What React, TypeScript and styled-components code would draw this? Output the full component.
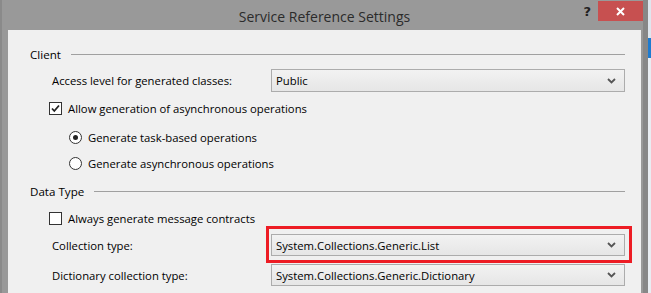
import React from "react";
import styled, { createGlobalStyle } from "styled-components";

const Global = createGlobalStyle`
  html, body { margin: 0; padding: 0; }
  body {
    width: 651px;
    height: 293px;
    overflow: hidden;
    background: #8c8c8c;
    font-family: "Open Sans", "Noto Sans", sans-serif;
  }
`;

const Screen = styled.div`
  display: flex;
  width: 651px;
  height: 293px;
`;

const Window = styled.div`
  width: 641px;
  height: 293px;
  background: #999999;
  border-left: 2px solid #8a8a8a;
  display: flex;
  flex-direction: column;
  position: relative;
`;

const EdgeStrip = styled.div`
  width: 5px;
  background: #878787;
`;

const Desktop = styled.div`
  flex: 1;
  background: linear-gradient(#dfe6ee, #dfe6ee 38px, #1e7bd0 38px, #1e7bd0 58px, #e9edf2 58px);
`;

const TitleBar = styled.div`
  height: 30px;
  flex: none;
  display: flex;
  align-items: center;
  justify-content: center;
  position: relative;
`;

const Title = styled.span`
  font-family: "Open Sans", "Noto Sans", sans-serif;
  font-size: 14px;
  color: #2b2b2b;
  margin-left: 4px;
  margin-top: 2px;
`;

const HelpButton = styled.span`
  position: absolute;
  right: 52px;
  top: 4px;
  font-family: "DejaVu Sans", sans-serif;
  font-weight: bold;
  font-size: 13px;
  color: #222;
`;

const CloseButton = styled.div`
  position: absolute;
  right: 0;
  top: 1px;
  width: 45px;
  height: 20px;
  background: #c75050;
  display: flex;
  align-items: center;
  justify-content: center;
`;

const Panel = styled.div`
  flex: 1;
  margin: 0 2px 0 6px;
  background: #f0f0f0;
  padding: 16px 16px 0 22px;
  display: flex;
  flex-direction: column;
  position: relative;
  font-size: 11.3px;
  color: #000;
`;

const GroupHeader = styled.div<{ $mt?: number }>`
  height: 16px;
  display: flex;
  align-items: center;
  gap: 10px;
  margin-top: ${(p) => p.$mt ?? 0}px;
  font-size: 11.6px;
`;

const GroupRule = styled.div`
  flex: 1;
  height: 1px;
  background: #a0a0a0;
`;

const FieldRow = styled.div<{ $mt: number; $h: number }>`
  height: ${(p) => p.$h}px;
  margin-top: ${(p) => p.$mt}px;
  display: grid;
  grid-template-columns: 219px 1fr;
  align-items: center;
  padding-left: 22px;
`;

const FieldLabel = styled.span`
  white-space: nowrap;
`;

const Select = styled.div`
  height: 100%;
  box-sizing: border-box;
  border: 1px solid #acacac;
  background: linear-gradient(#f2f2f2, #e6e6e6);
  display: flex;
  align-items: center;
  justify-content: space-between;
  padding: 0 8px 0 4px;
`;

const OptionRow = styled.div<{ $mt: number; $indent: number }>`
  height: 16px;
  margin-top: ${(p) => p.$mt}px;
  padding-left: ${(p) => p.$indent}px;
  display: flex;
  align-items: center;
  gap: 6px;
  white-space: nowrap;
`;

const Box = styled.span`
  width: 13px;
  height: 13px;
  box-sizing: border-box;
  border: 1px solid #333;
  background: #fff;
  display: flex;
  align-items: center;
  justify-content: center;
  flex: none;
`;

const Radio = styled.span<{ $on?: boolean }>`
  width: 13px;
  height: 13px;
  box-sizing: border-box;
  border: 1px solid #333;
  border-radius: 50%;
  background: #fff;
  display: flex;
  align-items: center;
  justify-content: center;
  flex: none;
  &::after {
    content: "";
    width: 5px;
    height: 5px;
    border-radius: 50%;
    background: ${(p) => (p.$on ? "#222" : "transparent")};
  }
`;

const Highlight = styled.div`
  position: absolute;
  left: 258px;
  top: 196px;
  width: 366px;
  height: 37px;
  box-sizing: border-box;
  border: 3px solid #ed1c24;
  pointer-events: none;
`;

const Chevron = () => (
  <svg width="9" height="6" viewBox="0 0 9 6">
    <path d="M1 1 L4.5 4.5 L8 1" fill="none" stroke="#555" strokeWidth="1.8" />
  </svg>
);

const Check = () => (
  <svg width="11" height="11" viewBox="0 0 11 11">
    <path d="M2 5.5 L4.3 8 L9 2.5" fill="none" stroke="#222" strokeWidth="1.8" />
  </svg>
);

const CloseGlyph = () => (
  <svg width="9" height="9" viewBox="0 0 9 9">
    <path d="M1 1 L8 8 M8 1 L1 8" stroke="#fff" strokeWidth="2" />
  </svg>
);

export default function App() {
  return (
    <>
      <Global />
      <Screen>
        <Window>
          <TitleBar>
            <Title>Service Reference Settings</Title>
            <HelpButton>?</HelpButton>
            <CloseButton>
              <CloseGlyph />
            </CloseButton>
          </TitleBar>
          <Panel>
            <GroupHeader>
              <span>Client</span>
              <GroupRule />
            </GroupHeader>
            <FieldRow $mt={7} $h={23}>
              <FieldLabel>Access level for generated classes:</FieldLabel>
              <Select>
                <span>Public</span>
                <Chevron />
              </Select>
            </FieldRow>
            <OptionRow $mt={8} $indent={19}>
              <Box>
                <Check />
              </Box>
              <span>Allow generation of asynchronous operations</span>
            </OptionRow>
            <OptionRow $mt={13} $indent={39}>
              <Radio $on />
              <span>Generate task-based operations</span>
            </OptionRow>
            <OptionRow $mt={10} $indent={39}>
              <Radio />
              <span>Generate asynchronous operations</span>
            </OptionRow>
            <GroupHeader $mt={12}>
              <span>Data Type</span>
              <GroupRule />
            </GroupHeader>
            <OptionRow $mt={11} $indent={19}>
              <Box />
              <span>Always generate message contracts</span>
            </OptionRow>
            <FieldRow $mt={8} $h={22}>
              <FieldLabel>Collection type:</FieldLabel>
              <Select>
                <span>System.Collections.Generic.List</span>
                <Chevron />
              </Select>
            </FieldRow>
            <FieldRow $mt={8} $h={22}>
              <FieldLabel>Dictionary collection type:</FieldLabel>
              <Select>
                <span>System.Collections.Generic.Dictionary</span>
                <Chevron />
              </Select>
            </FieldRow>
            <Highlight />
          </Panel>
        </Window>
        <EdgeStrip />
        <Desktop />
      </Screen>
    </>
  );
}
